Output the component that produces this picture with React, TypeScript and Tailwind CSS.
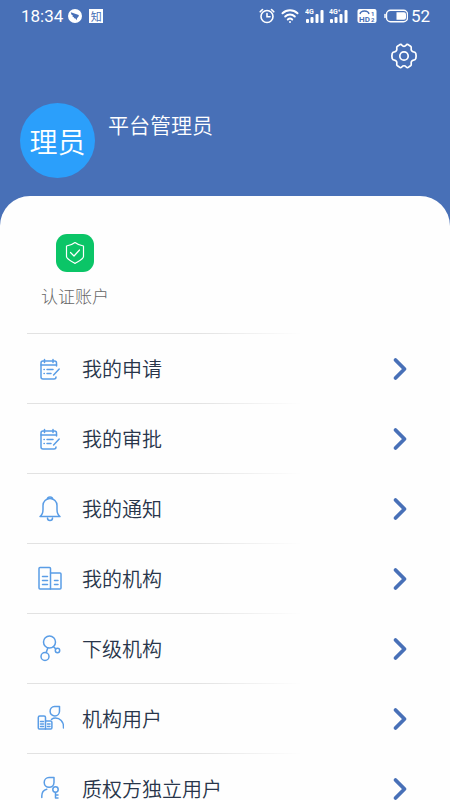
import React from 'react';

interface MenuItem {
  label: string;
  icon: React.ReactNode;
}

function LineIcon({ children }: { children: React.ReactNode }) {
  return (
    <svg
      className="h-7 w-7 shrink-0 text-[#5a9de6]"
      viewBox="0 0 28 28"
      fill="none"
      stroke="currentColor"
      strokeWidth="1.5"
      strokeLinecap="round"
      strokeLinejoin="round"
      aria-hidden="true"
    >
      {children}
    </svg>
  );
}

const formIcon = (
  <LineIcon>
    <path d="M20.500 11V8a2 2 0 0 0-2-2H7a2 2 0 0 0-2 2v14a2 2 0 0 0 2 2h11a2 2 0 0 0 2-2" />
    <path d="M8.500 4.500v3M17 4.500v3M5 10h15.500M8 14.500h.3M11 14.500h6M8 18.500h.3M11 18.500h4" />
    <path d="M23.200 14l-5.600 6" />
  </LineIcon>
);

const bellIcon = (
  <LineIcon>
    <path d="M11.500 4a2.500 2 0 0 1 5 0" />
    <path d="M4 21.500c2.400-1.700 3-3.800 3-7V10.500a7 7 0 0 1 14 0v4c0 3.200.6 5.300 3 7z" />
    <path d="M11.500 23a2.500 2.500 0 0 0 5 0" />
  </LineIcon>
);

const buildingIcon = (
  <LineIcon>
    <path d="M14.500 24H4a1 1 0 0 1-1-1V3.500a1 1 0 0 1 1-1h9.500a1 1 0 0 1 1 1z" />
    <path d="M14.500 8H24a1 1 0 0 1 1 1v14a1 1 0 0 1-1 1h-9.500" />
    <path d="M6.500 11.500h5M6.500 15.500h5M6.500 19.500h5M18.500 15.500h3.500M18.500 19.500h3.500" />
  </LineIcon>
);

const nodesIcon = (
  <LineIcon>
    <circle cx="13.500" cy="7" r="6" />
    <circle cx="9" cy="21.500" r="4" />
    <circle cx="21.500" cy="15.500" r="2.200" />
    <path d="M11.800 13l-1.600 4.600M17.500 11.700l2.300 2.200" />
  </LineIcon>
);

const orgUserIcon = (
  <LineIcon>
    <path d="M23.500 1.500h-5a4.700 4.700 0 1 0 5 4.700z" />
    <path d="M15.500 14.300c1.200-.8 2.600-1.200 4-1.200 4.500 0 8 3.600 8 8.600V23" />
    <path d="M9.500 24H3.300a1 1 0 0 1-1-1V12.500A1.500 1.500 0 0 1 3.800 11H8a1.500 1.500 0 0 1 1.500 1.500z" />
    <path d="M9.500 16h5.200a1.200 1.200 0 0 1 1.200 1.200v5.600a1.200 1.200 0 0 1-1.200 1.200H9.500" />
    <path d="M4.500 16.500h3M4.500 19h3M4.500 21.500h3M11.500 19h2.500M11.500 21.500h2.500" />
  </LineIcon>
);

const keyUserIcon = (
  <LineIcon>
    <path d="M18 2.500h-5a4.900 4.900 0 1 0 5 5z" />
    <path d="M5.800 22.500V21c0-3.300 2-6 5-6.800" />
    <circle cx="19.500" cy="14.500" r="2.700" />
    <path d="M19.500 17.500v5.500M19.500 20h2.500M19.500 23h2.500" />
  </LineIcon>
);

const menuItems: MenuItem[] = [
  { label: '我的申请', icon: formIcon },
  { label: '我的审批', icon: formIcon },
  { label: '我的通知', icon: bellIcon },
  { label: '我的机构', icon: buildingIcon },
  { label: '下级机构', icon: nodesIcon },
  { label: '机构用户', icon: orgUserIcon },
  { label: '质权方独立用户', icon: keyUserIcon },
];

function Signal({ label }: { label: string }) {
  return (
    <svg className="h-4 w-5" viewBox="0 0 20 16" fill="currentColor" aria-hidden="true">
      <text x="0" y="6" fontSize="7" fontWeight="700">{label}</text>
      <rect x="1" y="11" width="3" height="4" rx="1" />
      <rect x="5.500" y="9" width="3" height="6" rx="1" />
      <rect x="10.500" y="6" width="3" height="9" rx="1" />
      <rect x="15.500" y="2" width="3" height="13" rx="1" />
    </svg>
  );
}

function StatusBar() {
  return (
    <div className="flex h-8 shrink-0 items-center pr-5 pl-[21px] font-['Roboto','Liberation_Sans',sans-serif] text-[17px] leading-none">
      <span>18:34</span>
      <svg className="ml-1 h-4 w-4" viewBox="0 0 16 16" aria-hidden="true">
        <circle cx="8" cy="8" r="7" fill="#fff" />
        <path d="M3.800 4.200l7.200 2.600c1 .4 1.100 1 .5 1.700l-1.400 1.700-.6 2-1-1.800-1.900-.4.600-.8-1.900-.8.700-.6-1.600-1.200z" fill="#4870b7" />
      </svg>
      <span className="ml-1.5 flex h-3.5 w-3.5 items-center justify-center bg-white font-['Noto_Sans_CJK_SC',sans-serif] text-[11px] text-[#4870b7]">知</span>

      <div className="ml-auto flex items-center">
        <svg className="h-4 w-4" viewBox="0 0 16 16" fill="none" stroke="currentColor" strokeWidth="1.600" strokeLinecap="round" aria-hidden="true">
          <circle cx="8" cy="8.500" r="6" />
          <path d="M8 5.500v3.300h3M1.200 3.800l2.300-2.300M14.800 3.800l-2.300-2.300" />
        </svg>
        <svg className="ml-1.5 h-4 w-[18px]" viewBox="0 0 18 16" fill="none" stroke="currentColor" strokeWidth="2" strokeLinecap="round" aria-hidden="true">
          <path d="M1.500 5.300a11 11 0 0 1 15 0M4.200 8.500a7 7 0 0 1 9.600 0M6.800 11.500a3.300 3.300 0 0 1 4.400 0" />
          <circle cx="9" cy="14" r="1" fill="currentColor" stroke="none" />
        </svg>
        <span className="ml-1.5"><Signal label="4G" /></span>
        <span className="ml-1"><Signal label="4G⁺" /></span>
        <svg className="ml-2 h-4 w-5" viewBox="0 0 20 16" aria-hidden="true">
          <rect x="0.500" y="1" width="19" height="14" rx="2" fill="#fff" />
          <path d="M3 6c1-4 8-4 9 0" fill="none" stroke="#4870b7" strokeWidth="1.500" />
          <text x="2" y="13.500" fontSize="8" fontWeight="700" fill="#4870b7">HD</text>
          <text x="14" y="7.500" fontSize="6" fontWeight="700" fill="#4870b7">1</text>
          <text x="14" y="13.800" fontSize="6" fontWeight="700" fill="#4870b7">2</text>
        </svg>
        <svg className="ml-[7px] h-4 w-6" viewBox="0 0 24 16" aria-hidden="true">
          <rect x="2.500" y="2.200" width="21" height="11.600" rx="4" fill="none" stroke="#fff" strokeWidth="1.400" />
          <path d="M1 6.500v3" stroke="#fff" strokeWidth="1.500" strokeLinecap="round" />
          <path d="M12.500 4.200h7.500a2 2 0 0 1 2 2v3.600a2 2 0 0 1-2 2h-7.500z" fill="#fff" />
        </svg>
        <span className="ml-[3px]">52</span>
      </div>
    </div>
  );
}

export default function App() {
  return (
    <div className="flex h-screen w-full flex-col bg-[#4870b7] font-['Noto_Sans_CJK_SC',sans-serif] text-white">
      <StatusBar />

      <header className="shrink-0">
        <div className="flex justify-end pt-2.5 pr-8">
          <button type="button" aria-label="设置" className="h-7 w-7">
            <svg className="h-7 w-7" viewBox="0 0 28 28" fill="none" stroke="currentColor" strokeWidth="1.700" strokeLinejoin="round" aria-hidden="true">
              <circle cx="14" cy="14" r="4.200" />
              <path d="M9 3.200C10.500 2 11.300 2.300 12 3.300c1 1.300 3 1.300 4 0 .7-1 1.500-1.300 3-.1l1.600 1c1 .7.800 1.500.6 2.500-.3 1.600.7 3 2.400 3.200 1.300.1 1.900.5 2.200 1.600.4 1.500.4 3.500 0 5-.3 1.100-.9 1.500-2.200 1.600-1.700.2-2.700 1.600-2.400 3.200.2 1 .4 1.800-.6 2.500l-1.600 1c-1.500 1.200-2.300.9-3-.1-1-1.300-3-1.300-4 0-.7 1-1.500 1.300-3 .1l-1.600-1c-1-.7-.8-1.500-.6-2.500.3-1.600-.7-3-2.400-3.200-1.300-.1-1.900-.5-2.200-1.600-.4-1.500-.4-3.500 0-5 .3-1.100.9-1.500 2.200-1.600 1.700-.2 2.700-1.600 2.400-3.200-.2-1-.4-1.800.6-2.500z" />
            </svg>
          </button>
        </div>
        <div className="flex gap-[13px] px-5 pt-[33px] pb-[18px]">
          <div className="flex h-[75px] w-[75px] shrink-0 items-center justify-center rounded-full bg-[#2b9ffb] text-[28px] font-[350]">
            理员
          </div>
          <h1 className="pt-1.5 text-[21px] leading-[30px] font-[350]">平台管理员</h1>
        </div>
      </header>

      <main className="min-h-0 flex-1 overflow-y-auto rounded-t-[30px] bg-[#fefefe] pt-[38px] [scrollbar-width:none]">
        <button type="button" className="ml-[41px] flex flex-col items-center">
          <span className="flex h-[38px] w-[38px] items-center justify-center rounded-[11px] bg-[#0bc567]">
            <svg className="h-6 w-6" viewBox="0 0 24 24" fill="none" stroke="currentColor" strokeWidth="1.200" strokeLinecap="round" strokeLinejoin="round" aria-hidden="true">
              <path d="M12 1.500c2.500 2 5.500 3 8.500 3.500v10.500c0 2.500-4.500 4.500-8.500 7-4-2.500-8.500-4.500-8.500-7V5C6.500 4.500 9.500 3.500 12 1.500z" />
              <path d="M7.500 11.500l3.500 3.500 5.500-6" />
            </svg>
          </span>
          <span className="mt-3 text-[17px] leading-6 font-light text-[#666]">认证账户</span>
        </button>

        <ul className="mt-[25px] pl-[27px]">
          {menuItems.map((item) => (
            <li key={item.label}>
              <div className="h-px bg-linear-to-r from-[#e2e2e2] from-40% to-transparent to-65%" />
              <button type="button" className="flex h-[69px] w-full items-center pr-[42px] pl-[9px] text-left">
                {item.icon}
                <span className="ml-[18px] text-xl font-[350] text-[#28354a]">{item.label}</span>
                <svg className="ml-auto h-6 w-4" viewBox="0 0 16 24" fill="none" stroke="#4870b7" strokeWidth="3.800" strokeLinecap="round" strokeLinejoin="round" aria-hidden="true">
                  <path d="M3.500 3l9 9-9 9" />
                </svg>
              </button>
            </li>
          ))}
        </ul>
      </main>
    </div>
  );
}
